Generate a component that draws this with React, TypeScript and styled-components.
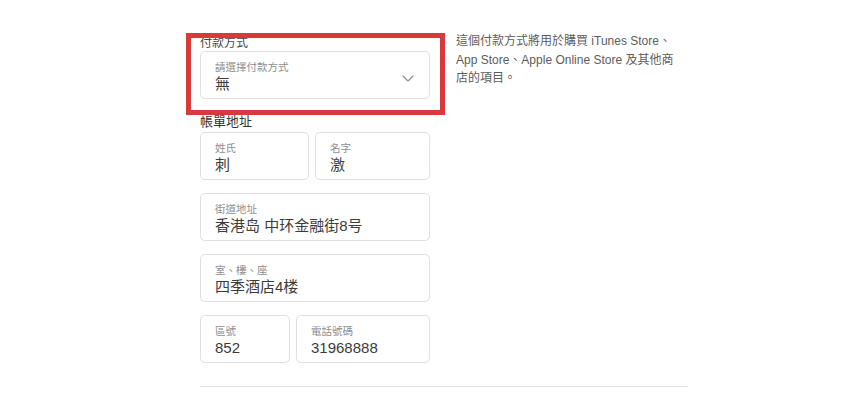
import React from "react";
import styled, { createGlobalStyle } from "styled-components";

const Global = createGlobalStyle`
  html, body { margin: 0; padding: 0; background: #ffffff; }
  body { font-family: "Liberation Sans", "Noto Sans CJK TC", sans-serif; color: #333; }
`;

const Page = styled.div`
  padding: 32px 0 0 200px;
  width: 488px;
`;

const Section = styled.div`
  display: flex;
  align-items: flex-start;
  gap: 26px;
`;

const LeftCol = styled.div`
  width: 230px;
  display: flex;
  flex-direction: column;
  padding-top: 3px;
`;

const PaymentGroup = styled.div`
  position: relative;
  display: flex;
  flex-direction: column;
`;

const Highlight = styled.div`
  position: absolute;
  top: -2px;
  left: -14px;
  right: -15px;
  bottom: -16px;
  border: 5px solid #d8393b;
  pointer-events: none;
`;

const GroupLabel = styled.div`
  font-size: 12px;
  line-height: 16px;
  color: #444;
`;

const Heading = styled.div`
  font-size: 13px;
  line-height: 18px;
  color: #333;
  margin: 14px 0 1px;
`;

const Rows = styled.div`
  display: flex;
  flex-direction: column;
  gap: 13px;
`;

const Row = styled.div<{ $cols: string }>`
  display: grid;
  grid-template-columns: ${(p) => p.$cols};
  gap: 6px;
`;

const Field = styled.div`
  height: 48px;
  box-sizing: border-box;
  border: 1px solid #e0e0e0;
  border-radius: 5px;
  background: #fff;
  box-shadow: 0 0 1px rgba(0, 0, 0, 0.04);
  padding: 8px 14px 0;
  display: flex;
  align-items: flex-start;
  justify-content: space-between;
`;

const FieldText = styled.div`
  display: flex;
  flex-direction: column;
`;

const FieldLabel = styled.span`
  font-size: 10.5px;
  line-height: 14px;
  color: #8e8e8e;
`;

const FieldValue = styled.span`
  font-size: 15px;
  line-height: 20px;
  color: #3c3c3c;
`;

const Chevron = styled.svg`
  margin-top: 15px;
  margin-right: 1px;
  flex: none;
`;

const Help = styled.p`
  margin: 0;
  width: 228px;
  font-size: 12px;
  line-height: 18.5px;
  color: #5c5c5c;
`;

const Divider = styled.hr`
  margin: 23px 0 0;
  border: none;
  border-top: 1px solid #e0e0e0;
  height: 0;
`;

function TextField({ label, value }: { label: string; value: string }) {
  return (
    <Field>
      <FieldText>
        <FieldLabel>{label}</FieldLabel>
        <FieldValue>{value}</FieldValue>
      </FieldText>
    </Field>
  );
}

export default function App() {
  return (
    <>
      <Global />
      <Page>
        <Section>
          <LeftCol>
            <PaymentGroup>
              <GroupLabel>付款方式</GroupLabel>
              <Field>
                <FieldText>
                  <FieldLabel>請選擇付款方式</FieldLabel>
                  <FieldValue>無</FieldValue>
                </FieldText>
                <Chevron width="12" height="7" viewBox="0 0 12 7">
                  <path d="M1 1l5 5 5-5" fill="none" stroke="#888" strokeWidth="1.1" strokeLinecap="round" strokeLinejoin="round" />
                </Chevron>
              </Field>
              <Highlight />
            </PaymentGroup>
            <Heading>帳單地址</Heading>
            <Rows>
              <Row $cols="109px 1fr">
                <TextField label="姓氏" value="刺" />
                <TextField label="名字" value="激" />
              </Row>
              <Row $cols="1fr">
                <TextField label="街道地址" value="香港岛 中环金融街8号" />
              </Row>
              <Row $cols="1fr">
                <TextField label="室、樓、座" value="四季酒店4楼" />
              </Row>
              <Row $cols="90px 1fr">
                <TextField label="區號" value="852" />
                <TextField label="電話號碼" value="31968888" />
              </Row>
            </Rows>
          </LeftCol>
          <Help>這個付款方式將用於購買 iTunes Store、App Store、Apple Online Store 及其他商店的項目。</Help>
        </Section>
        <Divider />
      </Page>
    </>
  );
}
